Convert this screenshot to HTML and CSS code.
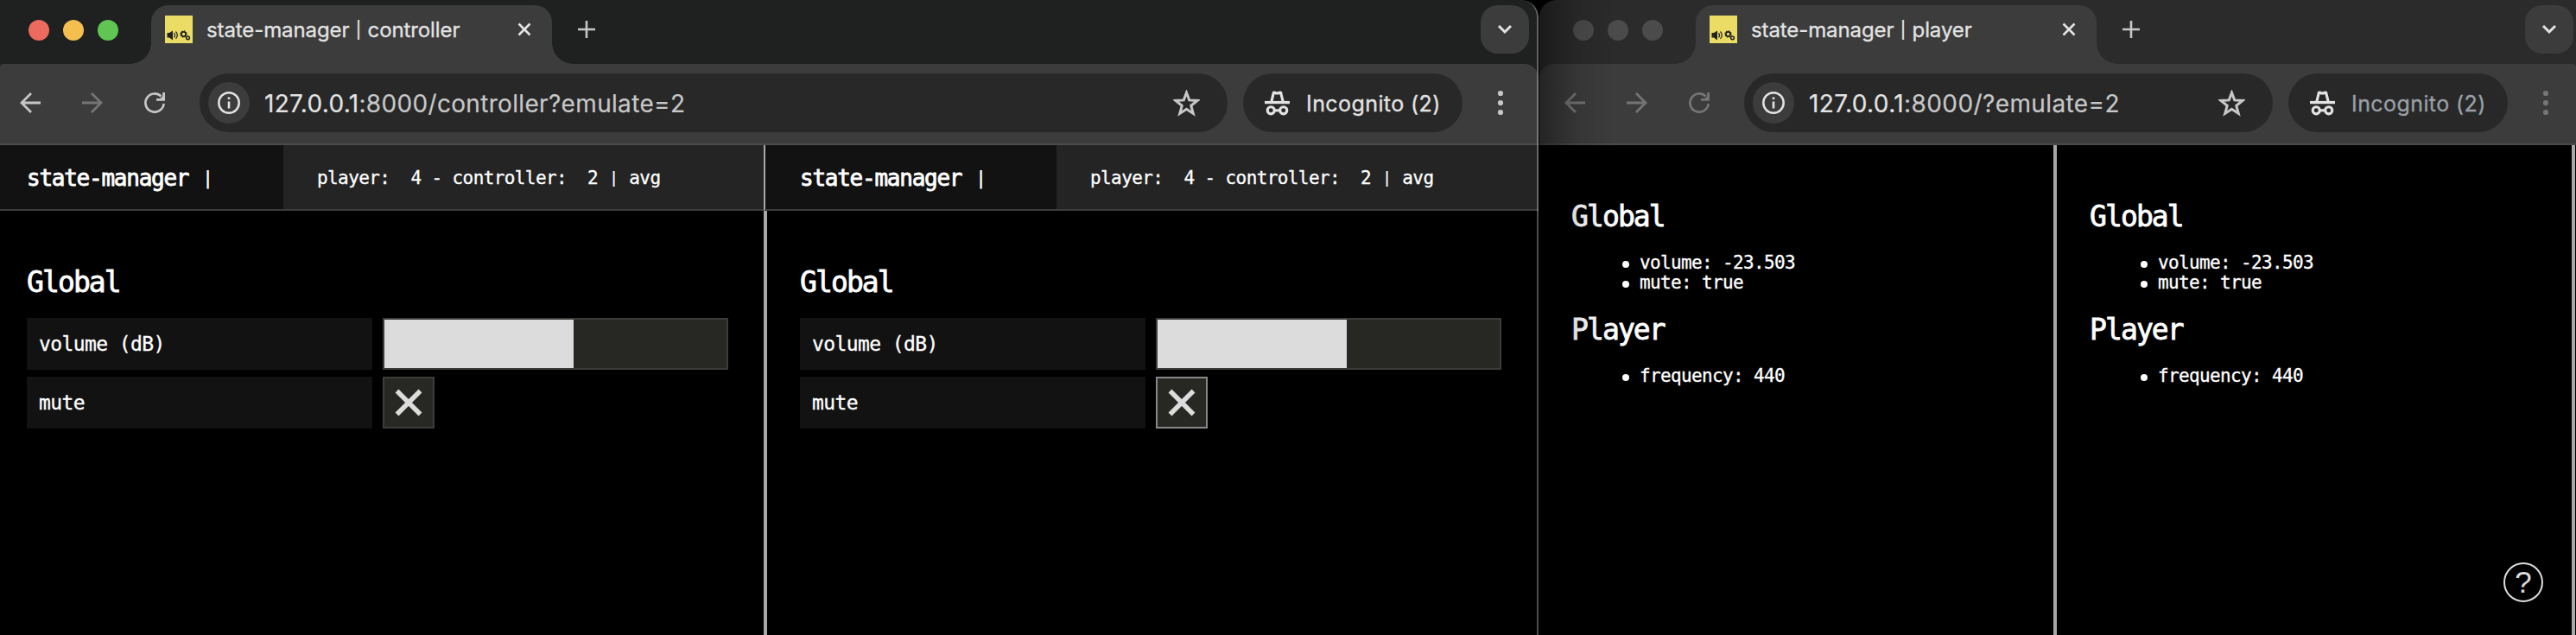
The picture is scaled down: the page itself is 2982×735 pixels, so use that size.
FILE: index.html
```
<!DOCTYPE html>
<html lang="en">
<head>
<meta charset="utf-8">
<title>state-manager</title>
<link rel="stylesheet" href="styles.css">
</head>
<body>
<svg width="0" height="0" class="defs">
  <symbol id="fav" viewBox="0 0 32 32"><path fill="#ebdc66" d="M0 0h32v32H0z"/><path fill="#222" d="M2.500 20h2.500l4-2.500v11l-4-3H2.500z"/><path d="M10.500 20q2 3 0 5.500M12.500 18.500q3.500 4 0 8.500" fill="none" stroke="#222" stroke-width="1.200"/><g fill="none" stroke="#222"><circle cx="21.500" cy="21.500" r="2.600" stroke-width="1.700"/><circle cx="21.500" cy="21.500" r="3.600" stroke-width="1.200" stroke-dasharray="1.400 1.430"/><circle cx="26.500" cy="25.800" r="1.900" stroke-width="1.500"/></g></symbol>
  <symbol id="close" viewBox="0 0 16 16"><path d="M1.500 1.500l13 13M14.500 1.500l-13 13" fill="none" stroke="currentColor" stroke-width="2.6"/></symbol>
  <symbol id="plus" viewBox="0 0 20 20"><path d="M10 0v20M0 10h20" fill="none" stroke="currentColor" stroke-width="2.6"/></symbol>
  <symbol id="chev" viewBox="0 0 18 12"><path d="M2 2l7 7 7-7" fill="none" stroke="currentColor" stroke-width="3"/></symbol>
  <symbol id="back" viewBox="0 0 24 24"><path d="M24 12H2M13 1L2 12l11 11" fill="none" stroke="currentColor" stroke-width="2.8"/></symbol>
  <symbol id="reload" viewBox="0 0 24 24"><path d="M19.500 4.500A10.600 10.600 0 1 0 22.600 13" fill="none" stroke="currentColor" stroke-width="2.700"/><path d="M21.200 0H24v9.800H14V7h4.500l2.700-2.800z" fill="currentColor"/></symbol>
  <symbol id="info" viewBox="0 0 26 26"><circle cx="13" cy="13" r="11.700" fill="none" stroke="currentColor" stroke-width="2.500"/><path d="M13 11.500v8M13 6.500v2.600" stroke="currentColor" stroke-width="2.600"/></symbol>
  <symbol id="star" viewBox="0 0 30 30"><path d="M15 3.200l3.100 8.300 9 .5-7 5.700 2.400 8.800-7.500-4.900-7.500 4.900 2.400-8.800-7-5.700 9-.5z" fill="none" stroke="currentColor" stroke-width="2.900"/></symbol>
  <symbol id="incog" viewBox="0 0 28 28"><path d="M0 11.500h28v3.200H0z" fill="currentColor"/><path d="M7.500 12.500L10 2.200q1.500-.4 2.500.6h3q1-1 2.500-.6l2.500 10.300" fill="none" stroke="currentColor" stroke-width="3"/><g fill="none" stroke="currentColor" stroke-width="3"><circle cx="7" cy="22" r="3.900"/><circle cx="21" cy="22" r="3.900"/><path d="M11 22h6"/></g></symbol>
  <symbol id="dots" viewBox="0 0 8 30"><g fill="currentColor"><circle cx="4" cy="4" r="3.100"/><circle cx="4" cy="15" r="3.100"/><circle cx="4" cy="26" r="3.100"/></g></symbol>
  <symbol id="cross" viewBox="0 0 32 32"><path d="M2.500 2.500l27 27M29.500 2.500l-27 27" stroke="#dcdcdc" stroke-width="5.500"/></symbol>
</svg>
<div class="desktop">
  <section class="window controller">
    <div class="tabs">
      <div class="lights"><i class="red"></i><i class="amber"></i><i class="green"></i></div>
      <div class="tab"><svg class="fav"><use href="#fav"/></svg><span class="tabname">state-manager <span class="bar">|</span> controller</span><svg class="close"><use href="#close"/></svg></div>
      <svg class="plus"><use href="#plus"/></svg>
      <div class="more"><svg><use href="#chev"/></svg></div>
    </div>
    <div class="toolbar">
      <svg class="nav"><use href="#back"/></svg><svg class="nav fwd"><use href="#back"/></svg><svg class="nav"><use href="#reload"/></svg>
      <div class="url"><span class="site"><svg><use href="#info"/></svg></span><span class="addr"><b>127.0.0.1</b>:8000/controller?emulate=2</span><svg class="star"><use href="#star"/></svg></div>
      <div class="incog"><svg><use href="#incog"/></svg><span>Incognito (2)</span></div>
      <svg class="dots"><use href="#dots"/></svg>
    </div>
    <div class="page">
      <div class="pane">
        <header class="head"><div class="name">state-manager <span class="bar">|</span></div><div class="stat">player:&nbsp; 4 - controller:&nbsp; 2 <span class="bar">|</span> avg</div></header>
        <div class="body"><h2>Global</h2>
          <div class="row"><div class="label">volume (dB)</div><div class="slider"><div class="fill"></div></div></div>
          <div class="row"><div class="label">mute</div><div class="toggle"><svg><use href="#cross"/></svg></div></div>
        </div>
      </div>
      <div class="pane second">
        <header class="head"><div class="name">state-manager <span class="bar">|</span></div><div class="stat">player:&nbsp; 4 - controller:&nbsp; 2 <span class="bar">|</span> avg</div></header>
        <div class="body"><h2>Global</h2>
          <div class="row"><div class="label">volume (dB)</div><div class="slider"><div class="fill"></div></div></div>
          <div class="row"><div class="label">mute</div><div class="toggle hover"><svg><use href="#cross"/></svg></div></div>
        </div>
      </div>
    </div>
  </section>
  <section class="window player">
    <div class="tabs">
      <div class="lights"><i></i><i></i><i></i></div>
      <div class="tab"><svg class="fav"><use href="#fav"/></svg><span class="tabname">state-manager <span class="bar">|</span> player</span><svg class="close"><use href="#close"/></svg></div>
      <svg class="plus"><use href="#plus"/></svg>
      <div class="more"><svg><use href="#chev"/></svg></div>
    </div>
    <div class="toolbar">
      <svg class="nav"><use href="#back"/></svg><svg class="nav fwd"><use href="#back"/></svg><svg class="nav"><use href="#reload"/></svg>
      <div class="url"><span class="site"><svg><use href="#info"/></svg></span><span class="addr"><b>127.0.0.1</b>:8000/?emulate=2</span><svg class="star"><use href="#star"/></svg></div>
      <div class="incog"><svg><use href="#incog"/></svg><span>Incognito (2)</span></div>
      <svg class="dots"><use href="#dots"/></svg>
    </div>
    <div class="page">
      <div class="pane">
        <h2>Global</h2><ul><li>volume: -23.503</li><li>mute: true</li></ul>
        <h2>Player</h2><ul><li>frequency: 440</li></ul>
      </div>
      <div class="pane">
        <h2>Global</h2><ul><li>volume: -23.503</li><li>mute: true</li></ul>
        <h2>Player</h2><ul><li>frequency: 440</li></ul>
        <div class="help">?</div>
      </div>
    </div>
  </section>
</div>
</body>
</html>
```
FILE: styles.css
```
* { box-sizing: border-box; }
body { margin: 0; background: #000; overflow: hidden; }
.defs { position: absolute; }
svg { display: block; flex: none; }
.desktop { display: flex; width: 2982px; height: 735px; overflow: hidden; background: #000; font-family: Inter, "Liberation Sans", sans-serif; }
.window { display: flex; flex-direction: column; height: 735px; flex: none; position: relative; overflow: hidden; background: #1f2120; color: #e3e3e3; }
.controller { width: 1781px; border-top-right-radius: 20px; }
.controller::after { content: ""; position: absolute; inset: 0; border-right: 2px solid rgba(255, 255, 255, .3); border-top-right-radius: 20px; }
.player { width: 1200px; margin-left: 1px; border-top-left-radius: 20px; background: #2b2b2b; }
.player::after { content: ""; position: absolute; inset: 0 auto 0 0; width: 90px; background: linear-gradient(90deg, rgba(0, 0, 0, .4), rgba(0, 0, 0, .1) 50%, transparent); }

.tabs { display: flex; height: 74px; flex: none; padding: 6px 11px 0 33px; align-items: flex-start; }
.player .tabs { padding: 6px 3px 0 39px; }
.lights { display: flex; gap: 16px; margin: 17px 38px 0 0; }
.lights i { width: 24px; height: 24px; border-radius: 50%; background: #4b4b4b; }
.lights .red { background: #ed6a5e; }
.lights .amber { background: #f5bf4f; }
.lights .green { background: #61c554; }
.tab { display: flex; align-items: center; width: 464px; height: 68px; padding: 0 24px 12px 16px; background: #3c3c3c; border-radius: 20px 20px 0 0; position: relative; }
.tab::before, .tab::after { content: ""; position: absolute; bottom: 0; width: 24px; height: 24px; }
.tab::before { left: -24px; background: radial-gradient(circle at 0 0, transparent 23.500px, #3c3c3c 24px); }
.tab::after { right: -24px; background: radial-gradient(circle at 100% 0, transparent 23.500px, #3c3c3c 24px); }
.fav { width: 32px; height: 32px; }
.tabname { margin-left: 16px; font-size: 24px; letter-spacing: -.1px; white-space: nowrap; -webkit-text-stroke: .3px currentColor; }
.bar { display: inline-block; transform: scaleY(.8); -webkit-text-stroke: 0; }
.close { width: 16px; height: 16px; margin-left: auto; }
.plus { width: 20px; height: 20px; margin: 18px 0 0 30px; color: #c7c7c7; }
.more { display: flex; align-items: center; justify-content: center; width: 56px; height: 56px; margin-left: auto; border-radius: 20px; background: #3c3c3c; }
.more svg { width: 18px; height: 12px; }

.toolbar { display: flex; align-items: center; height: 94px; flex: none; padding: 0 40px 2px 23px; background: #3c3c3c; border-bottom: 2px solid #4a4a4a; border-radius: 4px 16px 0 0; color: #c7c7c7; }
.player .toolbar { padding: 0 30px 2px 29px; border-radius: 16px 4px 0 0; }
.nav { width: 24px; height: 24px; margin-right: 48px; }
.fwd { transform: scaleX(-1); color: #757575; }
.player .nav { color: #757575; }
.nav + .url { margin-left: -8px; }
.url { display: flex; align-items: center; width: 1190px; height: 68px; padding: 0 32px 0 10px; border-radius: 34px; background: #282828; }
.player .url { width: 612px; }
.site { display: flex; align-items: center; justify-content: center; width: 48px; height: 48px; border-radius: 50%; background: #3c3c3c; color: #e3e3e3; }
.site svg { width: 26px; height: 26px; }
.addr { margin: 2px 0 0 17px; font-size: 28px; letter-spacing: .33px; white-space: nowrap; -webkit-text-stroke: .2px currentColor; }
.addr b { font-weight: 400; color: #e3e3e3; }
.player .addr { letter-spacing: .4px; }
.star { width: 31px; height: 31px; margin-left: auto; }
.incog { display: flex; align-items: center; width: 254px; height: 68px; margin-left: 18px; padding-left: 25px; border-radius: 34px; background: #282828; color: #e3e3e3; font-size: 25px; white-space: nowrap; }
.incog svg { width: 29px; height: 29px; }
.incog span { margin: 2px 0 0 19px; letter-spacing: .42px; -webkit-text-stroke: .3px currentColor; }
.player .incog span { color: #9aa0a6; }
.dots { width: 8px; height: 30px; margin-left: 40px; }
.player .dots { color: #757575; }

.page { display: flex; flex: 1; background: #000; color: #fff; font-family: "DejaVu Sans Mono", monospace; -webkit-text-stroke: .3px #fff; }
.controller .pane { width: 884px; flex: none; }
.controller .second { width: 897px; position: relative; }
.second .head { border-left: 2px solid #a8a8a8; }
.second .body { border-left: 4px solid #a8a8a8; padding-left: 38px; }
.head { display: flex; height: 76px; background: #242424; border-bottom: 2px solid #3c3c3c; line-height: 76px; white-space: pre; }
.name { width: 328px; height: 74px; padding-left: 31px; background: #121212; font-size: 26px; letter-spacing: -1.250px; -webkit-text-stroke: .8px #fff; }
.second .name { width: 337px; padding-left: 40px; }
.stat { padding-left: 39px; font-size: 21px; letter-spacing: -.600px; }
.body { height: 491px; padding: 62px 0 0 31px; }
h2 { margin: 0; font-size: 33px; font-weight: 400; letter-spacing: -1.900px; line-height: 42px; -webkit-text-stroke: .8px #fff; }
.body h2 { margin-bottom: 20px; }
.row { display: flex; gap: 12px; margin-bottom: 8px; }
.label { width: 400px; height: 60px; padding-left: 14px; background: #121212; font-size: 23px; line-height: 60px; letter-spacing: -.600px; }
.slider { width: 400px; height: 60px; border: 2px solid #3c3d38; background: #272823; }
.fill { width: 219px; height: 56px; background: #dcdcdc; }
.toggle { display: flex; align-items: center; justify-content: center; width: 60px; height: 60px; border: 2px solid #3c3d38; background: #272823; }
.toggle.hover { border-color: #888; }
.toggle svg { width: 32px; height: 32px; }

.player .pane { width: 600px; flex: none; position: relative; padding: 62px 0 0 38px; border-right: 4px solid #a8a8a8; }
.player .pane:first-child { width: 599px; padding-left: 37px; }
.player ul { margin: 21px 0 22px; padding: 0 0 0 79px; list-style: none; font-size: 21px; line-height: 23px; letter-spacing: -.640px; }
.player li { display: flex; align-items: center; }
.player li::before { content: ""; flex: none; width: 8px; height: 8px; margin: 2px 12px 0 -20px; border-radius: 50%; background: #fff; }
.help { position: absolute; left: 517px; top: 472px; width: 46px; height: 46px; margin-top: 11px; border: 2px solid #dcdcdc; border-radius: 50%; color: #dcdcdc; font: 35px/41px "Liberation Sans", sans-serif; text-align: center; -webkit-text-stroke: 0; }
```
